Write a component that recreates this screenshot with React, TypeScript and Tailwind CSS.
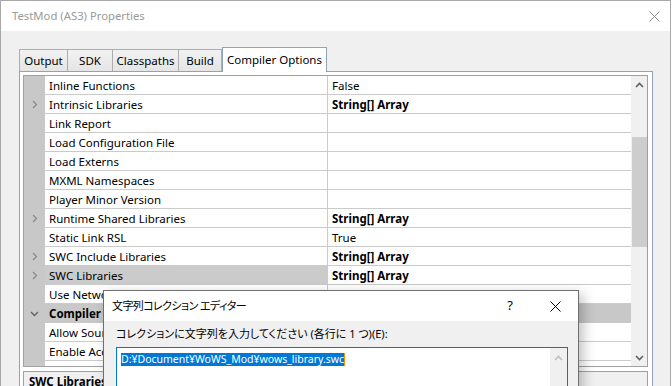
import React from 'react';

type Row = { name: string; value?: string; bold?: boolean; expand?: boolean; selected?: boolean; category?: boolean };

const rows: Row[] = [
  { name: 'Inline Functions', value: 'False' },
  { name: 'Intrinsic Libraries', value: 'String[] Array', bold: true, expand: true },
  { name: 'Link Report' },
  { name: 'Load Configuration File' },
  { name: 'Load Externs' },
  { name: 'MXML Namespaces' },
  { name: 'Player Minor Version' },
  { name: 'Runtime Shared Libraries', value: 'String[] Array', bold: true, expand: true },
  { name: 'Static Link RSL', value: 'True' },
  { name: 'SWC Include Libraries', value: 'String[] Array', bold: true, expand: true },
  { name: 'SWC Libraries', value: 'String[] Array', bold: true, expand: true, selected: true },
  { name: 'Use Network Sandbox', value: 'True' },
  { name: 'Compiler Options', category: true },
  { name: 'Allow Source Path Overlap', value: 'False' },
  { name: 'Enable Accessibility', value: 'False' },
  { name: 'Keep AS3 Metadata', value: '' },
];

const Chevron = ({ down }: { down?: boolean }) => (
  <svg width="9" height="9" viewBox="0 0 9 9" className="block">
    {down ? (
      <polyline points="1,3 4.5,6.5 8,3" fill="none" stroke="#606060" strokeWidth="1.3" />
    ) : (
      <polyline points="3,1 6.5,4.5 3,8" fill="none" stroke="#8a8a8a" strokeWidth="1.3" />
    )}
  </svg>
);

const GridRow = ({ row }: { row: Row }) => {
  if (row.category) {
    return (
      <div className="flex h-[19px] bg-[#c8c8c8]">
        <div className="w-[21px] flex items-center justify-center">
          <Chevron down />
        </div>
        <div className="pl-[4px] font-bold leading-[19px]">{row.name}</div>
      </div>
    );
  }
  return (
    <div className="flex h-[19px]">
      <div className="w-[21px] shrink-0 bg-[#c8c8c8] flex items-center justify-center">
        {row.expand && <Chevron />}
      </div>
      <div className={`w-[282px] shrink-0 border-b border-[#cbcbcb] pl-[4px] leading-[19px] ${row.selected ? 'bg-[#cbcbcb]' : 'bg-white'}`}>
        {row.name}
      </div>
      <div className="w-px shrink-0 bg-[#cbcbcb]" />
      <div className={`flex-1 border-b border-[#cbcbcb] bg-white pl-[4px] leading-[19px] ${row.bold ? 'font-bold' : ''}`}>
        {row.value}
      </div>
    </div>
  );
};

export default function App() {
  return (
    <div className="relative w-[672px] h-[386px] overflow-hidden bg-white text-[11.5px] text-black font-['Noto_Sans','Noto_Sans_CJK_JP',sans-serif]">
      <div className="flex flex-col w-[671px] h-[400px] border border-[#a8a8a8]">
        {/* title bar */}
        <div className="h-[30px] shrink-0 bg-white flex items-center justify-between pl-[11px] pr-[10px]">
          <span className="text-[#9a9a9a] text-[11.3px]">TestMod (AS3) Properties</span>
          <svg width="11" height="11" viewBox="0 0 11 11">
            <path d="M0.5 0.5 L10.5 10.5 M10.5 0.5 L0.5 10.5" stroke="#8a8a8a" strokeWidth="1" />
          </svg>
        </div>

        {/* client */}
        <div className="flex-1 bg-[#f0f0f0] pt-[16px] pl-[18px] pr-[17px]">
          <div className="flex items-end h-[24px]">
            {['Output', 'SDK', 'Classpaths', 'Build'].map((t, i) => (
              <div
                key={t}
                className={`h-[22px] flex items-center justify-center border-l border-t border-[#adadad] bg-gradient-to-b from-[#f2f2f2] to-[#e5e5e5] ${i === 3 ? 'border-r' : ''} ${['w-[48px]', 'w-[45px]', 'w-[66px]', 'w-[44px]'][i]}`}
              >
                {t}
              </div>
            ))}
            <div className="relative z-10 -mb-px h-[25px] w-[105px] flex items-center justify-center bg-white border-l border-t border-r border-[#8fa4ba]">
              Compiler Options
            </div>
          </div>

          <div className="h-[340px] bg-white border border-[#8fa4ba] pl-[3px] pt-[3px] pr-[4px]">
            {/* property grid */}
            <div className="h-[292px] border border-[#a0a0a0] flex overflow-hidden">
              <div className="flex-1 overflow-hidden">
                {rows.map((r) => (
                  <GridRow key={r.name} row={r} />
                ))}
              </div>
              <div className="w-[16px] shrink-0 bg-[#f0f0f0] flex flex-col items-center">
                <div className="h-[17px] flex items-center justify-center">
                  <svg width="9" height="6" viewBox="0 0 9 6">
                    <polyline points="1,5 4.5,1.5 8,5" fill="none" stroke="#606060" strokeWidth="1.6" />
                  </svg>
                </div>
                <div className="h-[44px]" />
                <div className="w-[15px] h-[110px] bg-[#cdcdcd]" />
                <div className="flex-1" />
                <div className="h-[17px] flex items-center justify-center">
                  <svg width="9" height="6" viewBox="0 0 9 6">
                    <polyline points="1,1 4.5,4.5 8,1" fill="none" stroke="#606060" strokeWidth="1.6" />
                  </svg>
                </div>
              </div>
            </div>
            {/* description */}
            <div className="mt-[4px] h-[40px] border border-[#a0a0a0] bg-[#f0f0f0] pl-[5px] pt-[1px] font-bold">
              SWC Libraries
            </div>
          </div>
        </div>
      </div>

      {/* string collection editor dialog */}
      <div className="absolute left-[103px] top-[290px] w-[476px] h-[120px] border border-[#6f6f6f] bg-[#f0f0f0] shadow-[4px_4px_12px_rgba(0,0,0,0.25)] font-['Noto_Sans','Noto_Sans_CJK_JP',sans-serif] [font-feature-settings:'palt']">
        <div className="h-[30px] bg-white flex items-center pl-[8px] pr-[17px]">
          <span className="flex-1 text-[11px] tracking-[-0.6px]">文字列コレクション エディター</span>
          <span className="text-[13px] w-[12px] text-center mr-[34px]">?</span>
          <svg width="11" height="11" viewBox="0 0 11 11">
            <path d="M0.5 0.5 L10.5 10.5 M10.5 0.5 L0.5 10.5" stroke="#000" strokeWidth="1" />
          </svg>
        </div>
        <div className="pl-[12px] pt-[4px]">
          <div className="h-[17px] leading-[17px] text-[11px]">コレクションに文字列を入力してください (各行に 1 つ)(E):</div>
          <div className="mt-[5px] w-[452px] h-[70px] border border-[#0078d7] bg-white flex">
            <div className="flex-1 pl-[4px] pt-[2px]">
              <span className="bg-[#0078d7] text-white text-[10.5px] leading-[13px] inline-block border-r border-[#ff8c00]">D:¥Document¥WoWS_Mod¥wows_library.swc</span>
            </div>
            <div className="w-[17px] bg-[#f0f0f0] flex justify-center pt-[7px]">
              <svg width="9" height="6" viewBox="0 0 9 6">
                <polyline points="1,5 4.5,1.5 8,5" fill="none" stroke="#bfbfbf" strokeWidth="1.6" />
              </svg>
            </div>
          </div>
        </div>
      </div>
    </div>
  );
}
